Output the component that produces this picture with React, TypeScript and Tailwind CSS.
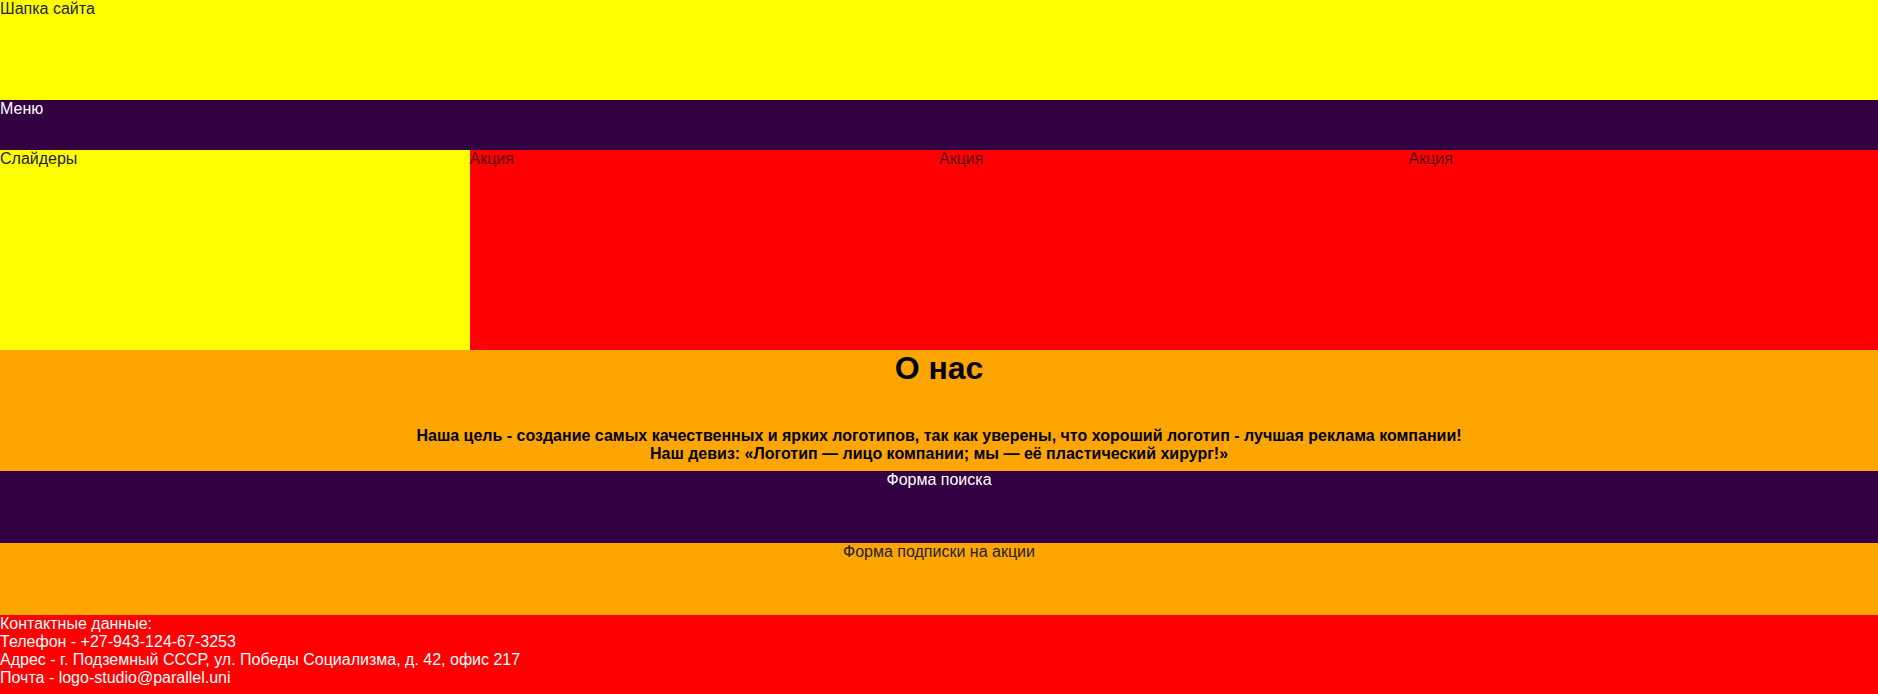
import React from "react";

export default function App() {
  return (
    <div className="w-full text-[16px] leading-[normal]" style={{ fontFamily: '"Liberation Sans", Arial, sans-serif' }}>
      <header className="h-[100px] bg-[#ffff00] text-[#222]">Шапка сайта</header>
      <nav className="h-[50px] bg-[#330042] text-white">Меню</nav>
      <section className="flex h-[200px]">
        <div className="w-1/4 bg-[#ffff00] text-[#222]">Слайдеры</div>
        <div className="w-1/4 bg-[#ff0000] text-[#5a0000]">Акция</div>
        <div className="w-1/4 bg-[#ff0000] text-[#5a0000]">Акция</div>
        <div className="w-1/4 bg-[#ff0000] text-[#5a0000]">Акция</div>
      </section>
      <section className="h-[121px] bg-[#ffa500] text-center text-black">
        <h1 className="m-0 text-[32px] font-bold leading-[37px]">О нас</h1>
        <p className="mt-[40px] mb-0 font-bold">
          Наша цель - создание самых качественных и ярких логотипов, так как уверены, что хороший логотип - лучшая реклама компании!
          <br />
          Наш девиз: «Логотип — лицо компании; мы — её пластический хирург!»
        </p>
      </section>
      <section className="h-[72px] bg-[#330042] text-center text-white">Форма поиска</section>
      <section className="h-[72px] bg-[#ffa500] text-center text-[#222]">Форма подписки на акции</section>
      <footer className="h-[80px] bg-[#ff0000] text-white">
        <div>Контактные данные:</div>
        <div>Телефон - +27-943-124-67-3253</div>
        <div>Адрес - г. Подземный СССР, ул. Победы Социализма, д. 42, офис 217</div>
        <div>Почта - logo-studio@parallel.uni</div>
      </footer>
    </div>
  );
}
